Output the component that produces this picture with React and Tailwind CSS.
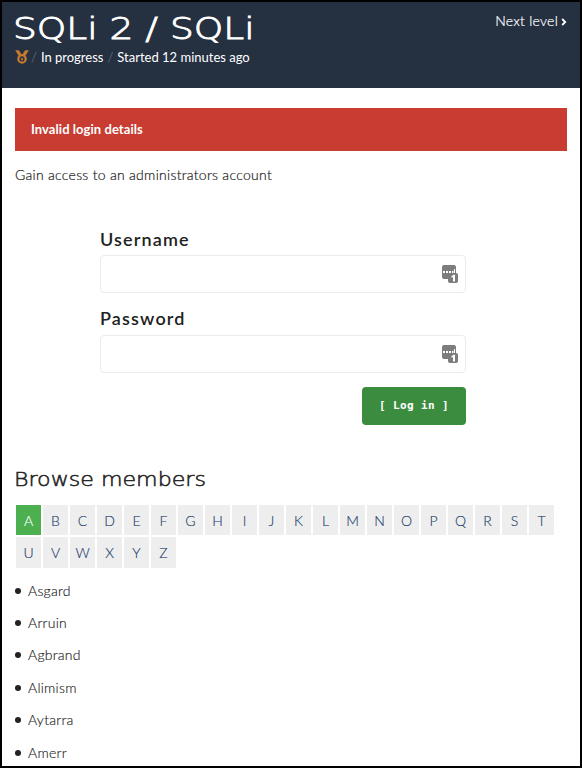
import React from "react";

const letters = "ABCDEFGHIJKLMNOPQRSTUVWXYZ".split("");
const members = ["Asgard", "Arruin", "Agbrand", "Alimism", "Aytarra", "Amerr"];

function Medal() {
  return (
    <svg className="mr-[2px] h-[14px] w-[14px] shrink-0" viewBox="0 0 14 14" fill="none">
      <path d="M0.200 0.300h3.600l2.400 3.500-2.600 2zM13.800 0.300h-3.600L7.800 3.800l2.600 2z" fill="#c77b30" />
      <circle cx="7" cy="8.900" r="3.700" stroke="#c77b30" strokeWidth="2.200" />
      <path d="M7 7.300l.5 1.100 1.200.2-.9.800.2 1.200-1-.6-1 .6.200-1.200-.9-.8 1.200-.2z" fill="#c77b30" />
    </svg>
  );
}

function KeyBadge() {
  return (
    <svg className="h-[18px] w-4" viewBox="0 0 16 18">
      <rect width="14" height="14" rx="2" fill="#7d7d7d" />
      <path d="M1 6h2v2H1zM4 6h2v2H4zM7 6h2v2H7zM10 6h1.500v2H10zM12 4h1v4h-1z" fill="#fff" />
      <rect x="6" y="8" width="10" height="10" rx="2" fill="#7d7d7d" />
      <path d="M9.500 11.200l2-1.400H13v6.700h-2V12l-1.500.8z" fill="#fff" />
    </svg>
  );
}

function Field({ label }) {
  return (
    <div>
      <label className="block text-[18px] leading-[31px] font-semibold tracking-[1.150px] text-[#222]">{label}</label>
      <div className="flex h-[38px] items-center justify-end rounded-[4px] border border-[#ebebeb] pr-[7px]">
        <KeyBadge />
      </div>
    </div>
  );
}

export default function App() {
  return (
    <div className="h-[768px] w-[582px] overflow-hidden border-2 border-black bg-white font-['Lato',sans-serif] text-[#222]">
      <header className="flex h-[86px] justify-between bg-[#253041] px-[13px] text-white">
        <div>
          <h1 className="mt-[6px] -ml-[2px] h-[40px] w-fit origin-left scale-x-[1.210] font-['DejaVu_Sans',sans-serif] text-[31px] leading-[40px] font-extralight whitespace-nowrap [-webkit-text-stroke:0.9px_#fff]">SQLi 2 / SQLi</h1>
          <div className="flex h-[18px] items-center text-[13px] leading-[18px] whitespace-nowrap">
            <Medal />
            <span className="mr-1 text-[#5a626e]">/</span>
            <span>In progress</span>
            <span className="mx-1 text-[#5a626e]">/</span>
            <span>Started 12 minutes ago</span>
          </div>
        </div>
        <a className="mt-[9px] flex h-5 items-center text-[14px] leading-5 font-light tracking-[0.250px] [-webkit-text-stroke:0.2px]">
          Next level
          <svg className="mt-[2px] ml-[3px] h-[8px] w-[6px]" viewBox="0 0 6 8" fill="none">
            <path d="M1.200 1l3 3-3 3" stroke="#fff" strokeWidth="1.800" />
          </svg>
        </a>
      </header>
      <main className="px-[13px]">
        <div className="mt-5 h-[43px] bg-[#c83c31] pl-4 text-[13px] leading-[43px] font-bold tracking-[0.060px] text-white">Invalid login details</div>
        <p className="mt-[14px] h-5 text-[14px] leading-5 font-light tracking-[0.280px] [-webkit-text-stroke:0.2px]">Gain access to an administrators account</p>
        <form className="mt-[39px] ml-[85px] flex w-[366px] flex-col">
          <Field label="Username" />
          <div className="mt-[10px] flex flex-col">
            <label className="block h-8 text-[18px] leading-[31px] font-semibold tracking-[1.150px] text-[#222]">Password</label>
            <div className="flex h-[38px] items-center justify-end rounded-[4px] border border-[#ebebeb] pr-[7px]">
              <KeyBadge />
            </div>
          </div>
          <button type="button" className="mt-[14px] h-[38px] w-[104px] self-end rounded-[4px] bg-[#3c8c40] font-['DejaVu_Sans_Mono',monospace] text-[11px] font-bold tracking-[0.400px] whitespace-pre text-white">[ Log in ]</button>
        </form>
        <h2 className="mt-[41px] -ml-px h-[26px] w-fit origin-left scale-x-[1.165] font-['DejaVu_Sans',sans-serif] text-[19px] leading-[26px] font-extralight whitespace-nowrap [-webkit-text-stroke:0.5px_#222]">Browse members</h2>
        <div className="mt-[13px] ml-px flex flex-wrap gap-[2px]">
          {letters.map((l, i) => (
            <a key={l} className={"flex w-[25px] items-center justify-center text-[14px] font-light [-webkit-text-stroke:0.15px] " + (i < 20 ? "h-[30px] " : "h-[31px] ") + (l === "A" ? "bg-[#4caf50] text-white" : "bg-[#eee] text-[#253f6b]")}>{l}</a>
          ))}
        </div>
        <ul className="mt-[6px]">
          {members.map((m) => (
            <li key={m} className="flex h-[32.400px] items-center text-[14px] font-light tracking-[0.250px] [-webkit-text-stroke:0.15px]">
              <span className="mt-px mr-[7px] h-[6px] w-[6px] rounded-full bg-[#222]" />
              {m}
            </li>
          ))}
        </ul>
      </main>
    </div>
  );
}
